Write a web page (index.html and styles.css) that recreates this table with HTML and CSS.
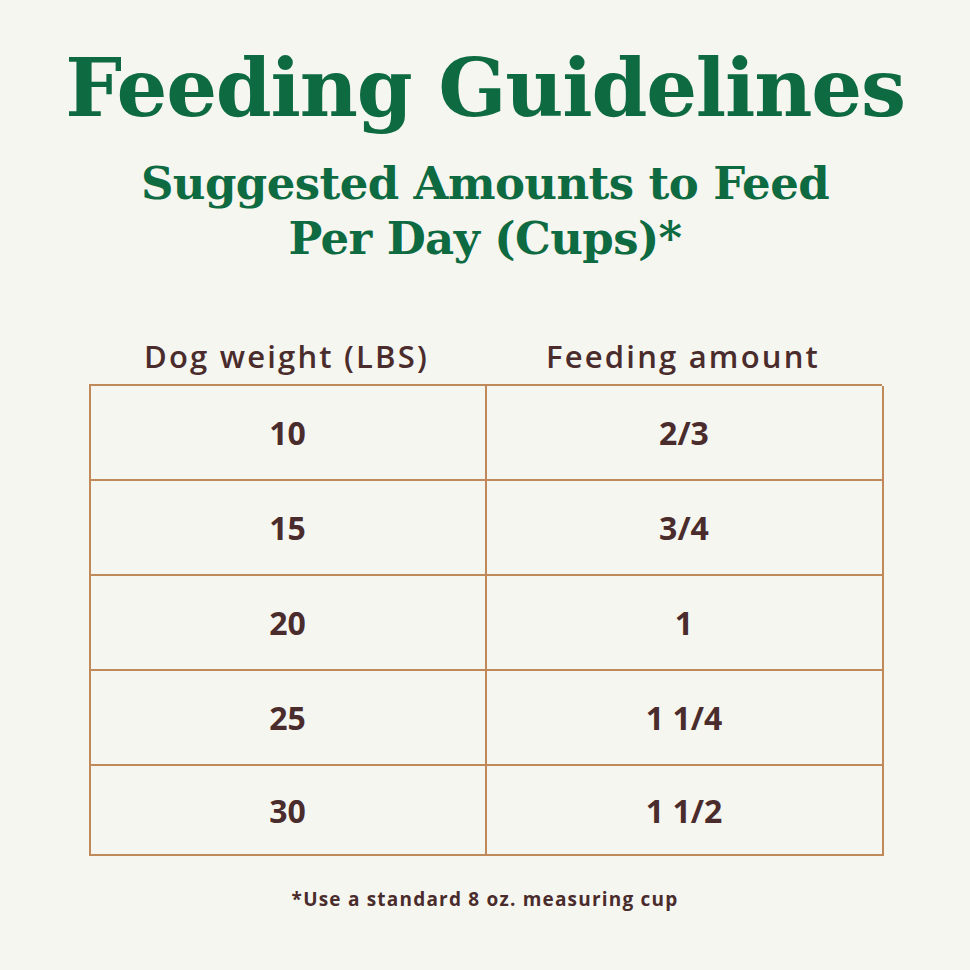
FILE: index.html
```html
<!DOCTYPE html>
<html>
<head>
<meta charset="utf-8">
<link rel="stylesheet" href="styles.css">
</head>
<body>
<main class="page">
  <h1 class="title">Feeding Guidelines</h1>
  <h2 class="subtitle">Suggested Amounts to Feed<br>Per Day (Cups)*</h2>
  <div class="table">
    <div class="head">
      <div class="hcell">Dog weight (LBS)</div>
      <div class="hcell">Feeding amount</div>
    </div>
    <div class="grid">
      <div class="cell">10</div><div class="cell">2/3</div>
      <div class="cell">15</div><div class="cell">3/4</div>
      <div class="cell">20</div><div class="cell">1</div>
      <div class="cell">25</div><div class="cell">1 1/4</div>
      <div class="cell last">30</div><div class="cell last">1 1/2</div>
    </div>
  </div>
  <p class="note">*Use a standard 8 oz. measuring cup</p>
</main>
</body>
</html>
```
FILE: styles.css
```css
html, body {
  margin: 0;
  padding: 0;
  background: #f6f6f1;
}
.page {
  width: 970px;
  height: 970px;
  display: flex;
  flex-direction: column;
  align-items: center;
  box-sizing: border-box;
  padding-top: 38px;
}
.title {
  margin: 0;
  font-family: "DejaVu Serif", serif;
  font-weight: 700;
  font-size: 80px;
  line-height: 100px;
  color: #0e6b41;
  letter-spacing: -1.2px;
}
.subtitle {
  margin: 18px 0 0;
  font-family: "DejaVu Serif", serif;
  font-weight: 700;
  font-size: 45px;
  line-height: 55px;
  color: #0e6b41;
  text-align: center;
  letter-spacing: -0.6px;
}
.table {
  margin-top: 70px;
  width: 793px;
}
.head {
  display: grid;
  grid-template-columns: 396px 397px;
  height: 48px;
}
.hcell {
  text-align: center;
  font-family: "Open Sans", sans-serif;
  font-weight: 600;
  font-size: 31px;
  line-height: 40px;
  letter-spacing: 2.2px;
  color: #4a2c2c;
}
.grid {
  display: grid;
  grid-template-columns: 396px 397px;
  border-top: 2px solid #c0895a;
  border-left: 2px solid #c0895a;
}
.cell {
  height: 93px;
  display: flex;
  align-items: center;
  justify-content: center;
  border-right: 2px solid #c0895a;
  border-bottom: 2px solid #c0895a;
  font-family: "Open Sans", sans-serif;
  font-weight: 700;
  font-size: 32px;
  color: #4a2c2c;
}
.cell.last {
  height: 88px;
}
.note {
  margin: 30px 0 0;
  font-family: "Open Sans", sans-serif;
  font-weight: 700;
  font-size: 19px;
  letter-spacing: 1.2px;
  color: #4a2c2c;
}
```
